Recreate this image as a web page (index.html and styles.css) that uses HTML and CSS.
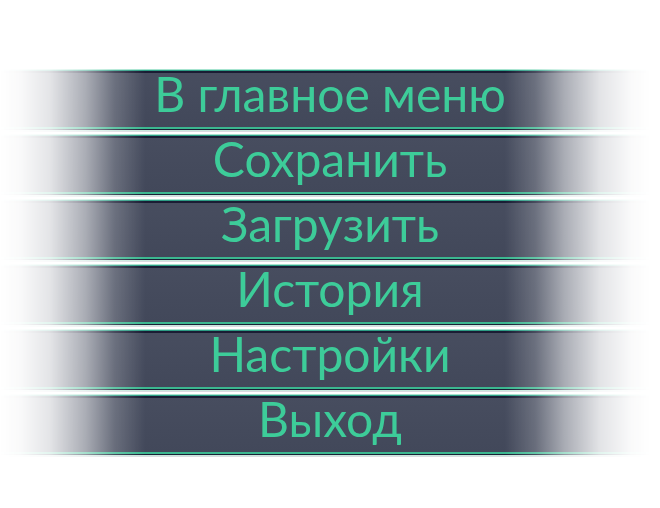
FILE: index.html
```html
<!DOCTYPE html>
<html lang="ru">
<head>
<meta charset="utf-8">
<title>Меню</title>
<link rel="stylesheet" href="styles.css">
</head>
<body>
<nav class="menu">
  <div class="item"><span class="label">В главное меню</span></div>
  <div class="item"><span class="label">Сохранить</span></div>
  <div class="item"><span class="label">Загрузить</span></div>
  <div class="item"><span class="label">История</span></div>
  <div class="item"><span class="label">Настройки</span></div>
  <div class="item"><span class="label">Выход</span></div>
</nav>
</body>
</html>
```
FILE: styles.css
```css
html, body {
  margin: 0;
  padding: 0;
  background: #ffffff;
}
body {
  width: 660px;
  height: 508px;
  overflow: hidden;
}
.menu {
  display: flex;
  flex-direction: column;
  gap: 0;
  padding-top: 69px;
}
.item {
  height: 65px;
  box-sizing: border-box;
  display: flex;
  flex-direction: column;
  background:
    linear-gradient(to bottom,
      #a6e4cf 0px, #a6e4cf 1px,
      #2c9c84 1px, #2c9c84 2px,
      #1a1d34 2px, #1a1d34 4px,
      #474d5f 4px, #42485a 58px,
      #3bb890 58px, #3bb890 60px,
      #1c1f36 60px, #1c1f36 61px,
      #c8e8dc 61px, #c8e8dc 62px,
      #d9dbe0 62px, #d9dbe0 63px,
      transparent 63px);
  -webkit-mask-image: linear-gradient(to right,
      rgba(0,0,0,0) 0px,
      rgba(0,0,0,0.03) 20px,
      rgba(0,0,0,0.15) 50px,
      rgba(0,0,0,0.45) 85px,
      rgba(0,0,0,0.8) 115px,
      rgba(0,0,0,1) 145px,
      rgba(0,0,0,1) 505px,
      rgba(0,0,0,0.8) 535px,
      rgba(0,0,0,0.45) 565px,
      rgba(0,0,0,0.15) 600px,
      rgba(0,0,0,0.03) 630px,
      rgba(0,0,0,0) 650px);
  mask-image: linear-gradient(to right,
      rgba(0,0,0,0) 0px,
      rgba(0,0,0,0.03) 20px,
      rgba(0,0,0,0.15) 50px,
      rgba(0,0,0,0.45) 85px,
      rgba(0,0,0,0.8) 115px,
      rgba(0,0,0,1) 145px,
      rgba(0,0,0,1) 505px,
      rgba(0,0,0,0.8) 535px,
      rgba(0,0,0,0.45) 565px,
      rgba(0,0,0,0.15) 600px,
      rgba(0,0,0,0.03) 630px,
      rgba(0,0,0,0) 650px);
  align-items: center;
}
.label {
  display: block;
  margin-top: -2px;
  height: 54px;
  line-height: 54px;
  font-family: "Lato", "Noto Sans", sans-serif;
  font-size: 48px;
  color: #3dcc99;
  white-space: nowrap;
}
```
